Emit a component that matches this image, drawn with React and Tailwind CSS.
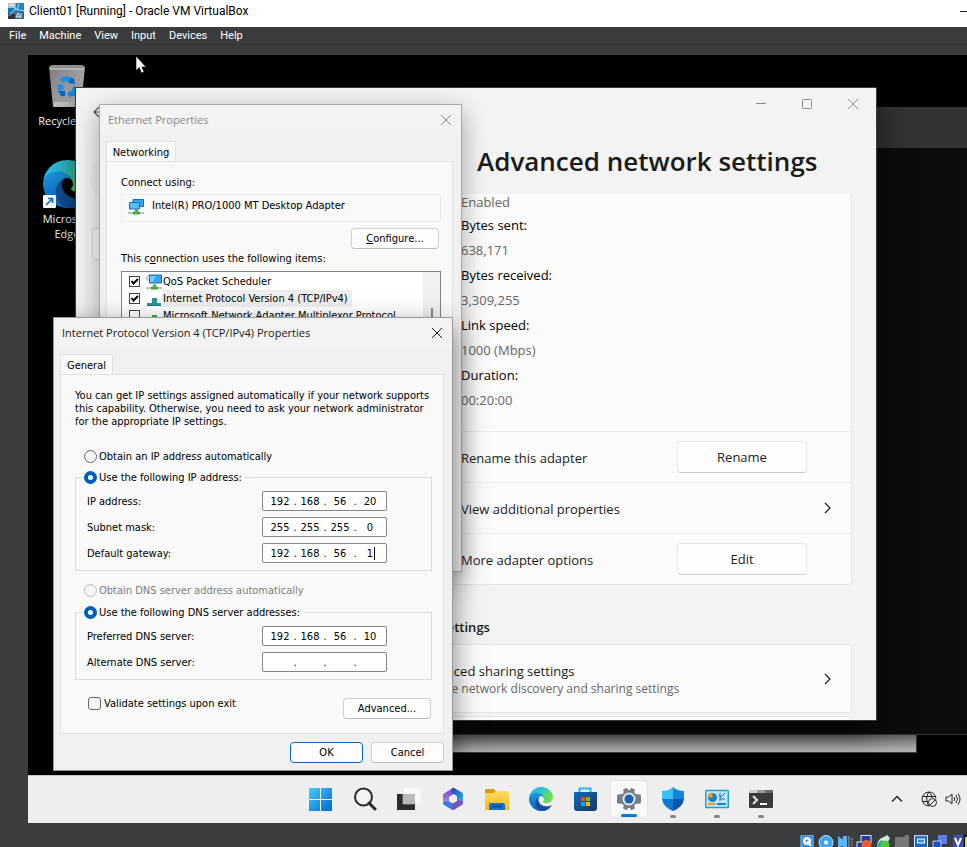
import React from "react";

const UI = "font-['Open_Sans','Noto_Sans',sans-serif]";
const HOST = "font-['Roboto','Open_Sans',sans-serif]";

const menus = ["File", "Machine", "View", "Input", "Devices", "Help"];

const stats = [
  ["Bytes sent:", "638,171"],
  ["Bytes received:", "3,309,255"],
  ["Link speed:", "1000 (Mbps)"],
  ["Duration:", "00:20:00"],
];

function Cross({ className = "" }) {
  return (
    <svg viewBox="0 0 12 12" className={`h-3 w-3 ${className}`} fill="none" stroke="currentColor" aria-hidden="true">
      <path d="M1 1l10 10M11 1L1 11" />
    </svg>
  );
}

function Chevron({ className = "" }) {
  return (
    <svg viewBox="0 0 12 12" className={`h-3 w-3 ${className}`} fill="none" stroke="currentColor" strokeWidth="1.2" aria-hidden="true">
      <path d="M4 1l5 5-5 5" />
    </svg>
  );
}

function VmIcon() {
  return (
    <svg viewBox="0 0 16 16" className="-mt-1.5 h-4 w-4" aria-hidden="true">
      <rect width="16" height="16" fill="#4b6f92" />
      <path d="M7 0h9v9h-9z" fill="#1f86c9" />
      <path d="M0 0h7v5H0z" fill="#b9bec4" />
      <path d="M0 5h7l-3 6H0z" fill="#1577bb" />
      <path d="M0 11h7v5H0z" fill="#3a2f35" />
      <path d="M7 0v6L1 13M7 6l9 2M11 1L9 7" stroke="#bfe6ff" fill="none" strokeWidth=".9" />
      <path d="M9 10l5-2 2 1v7H6z" fill="#33658f" />
      <path d="M8 14l2-4 2 4zM13 10v5M1 2h5" stroke="#eef6fb" fill="none" />
    </svg>
  );
}

function RecycleBin() {
  return (
    <svg viewBox="0 0 36 43" className="h-[43px] w-9" aria-hidden="true">
      <defs>
        <linearGradient id="bin" x1="0" y1="0" x2="1" y2="1">
          <stop offset="0" stopColor="#77797c" />
          <stop offset=".6" stopColor="#a4a6a9" />
          <stop offset="1" stopColor="#cfd0d2" />
        </linearGradient>
      </defs>
      <path d="M0 2L3 0h30l3 2-4 40H4z" fill="url(#bin)" />
      <path d="M0 2L3 0h30l3 2v2H0z" fill="#8e9093" />
      <path d="M1 4h34" stroke="#d6d7d9" />
      <path d="M5 37h26l-1 5H5z" fill="#c6c8ca" />
      <g fill="#1b93ea">
        <path d="M13 12l6-1 4 5-4 2-2-3-2 3-4-3z" />
        <path d="M21 12l4 2 1 5-6-1z" fill="#0a6ccb" />
        <path d="M9 19l5 1 1 5-3-1-1 4-3-5z" />
        <path d="M9 26l3 0h4v5h-4z" fill="#0a6ccb" />
        <path d="M25 20l3 5-3 6h-3v2l-4-4 4-4v2z" />
      </g>
    </svg>
  );
}

function EdgeIcon({ id, className = "" }) {
  return (
    <svg viewBox="0 0 256 256" className={className} aria-hidden="true">
      <defs>
        <linearGradient id={`${id}-wave`} x1="0" y1="0" x2="1" y2=".4">
          <stop offset="0" stopColor="#35b5f3" />
          <stop offset=".5" stopColor="#2bc3cf" />
          <stop offset="1" stopColor="#6ee04c" />
        </linearGradient>
        <linearGradient id={`${id}-body`} x1="0" y1="0" x2="0" y2="1">
          <stop offset="0" stopColor="#1b9de2" />
          <stop offset="1" stopColor="#0f5fc0" />
        </linearGradient>
      </defs>
      <path d="M235.680 195.460a93.730 93.730 0 0 1-10.540 4.710 101.870 101.870 0 0 1-35.900 6.460c-47.320 0-88.540-32.550-88.540-74.320a31.480 31.480 0 0 1 16.430-27.310c-42.800 1.800-53.800 46.400-53.800 72.530 0 73.880 68.090 81.370 82.760 81.370 7.910 0 19.840-2.300 27-4.560l1.310-.44a128.340 128.340 0 0 0 66.600-52.800 4 4 0 0 0-5.320-5.640z" fill="#11509c" />
      <path d="M105.730 241.420a79.200 79.200 0 0 1-22.740-21.340 80.720 80.720 0 0 1 29.530-120c3.120-1.470 8.450-4.130 15.540-4a32.350 32.350 0 0 1 25.690 13 31.880 31.880 0 0 1 6.360 18.660c0-.21 24.460-79.600-80-79.600-43.900 0-80 41.660-80 78.210a130.150 130.150 0 0 0 12.110 56 128 128 0 0 0 156.380 67.110 75.550 75.550 0 0 1-62.780-8z" fill={`url(#${id}-body)`} />
      <path d="M152.330 148.860c-.81 1.050-3.300 2.500-3.300 5.660 0 2.610 1.700 5.120 4.720 7.230 14.380 10 41.490 8.680 41.560 8.680a59.560 59.560 0 0 0 30.270-8.350 61.380 61.380 0 0 0 30.430-52.880c.26-22.410-8-37.310-11.340-43.910C223.520 23.870 177.720 0 128 0A128 128 0 0 0 0 126.200c.48-36.540 36.800-66.050 80-66.050 3.500 0 23.460.34 42 10.070 16.340 8.580 24.900 18.940 30.850 29.210 6.180 10.670 7.280 24.150 7.280 29.520s-2.740 13.330-7.800 19.910z" fill={`url(#${id}-wave)`} />
    </svg>
  );
}

function NetIcon({ gear = false }) {
  return (
    <svg viewBox="0 0 16 16" className="h-4 w-4" aria-hidden="true">
      {gear && <circle cx="3.500" cy="4" r="2.500" fill="none" stroke="#98a0a6" strokeWidth="2" strokeDasharray="1.500 1" />}
      <path d={gear ? "M3.500 1h12v8h-12z" : "M5 .5h10.500v7H5z"} fill="#36a3f0" stroke="#1f6ea8" />
      {!gear && <path d="M1.500 3.500h10v6.500h-10z" fill="#54bcff" stroke="#1f6ea8" />}
      {gear && <path d="M4 2h6l-3 6H4z" fill="#72caff" />}
      <path d="M7 10.500h3v2H7z" fill="#2da02a" />
      <path d="M0 13h16v2H0z" fill="#b7c0c2" />
      <path d="M5 12.500h7v3H5z" fill="#39b131" />
    </svg>
  );
}

function ProtocolIcon({ color }) {
  return (
    <svg viewBox="0 0 14 16" className="h-4 w-4" aria-hidden="true">
      <path d="M5 7h5v5h4v3H0v-3h5z" fill={color} />
      <path d="M0 14h14v1H0z" fill="#1d7077" />
    </svg>
  );
}

function CheckItem({ id, label, checked, selected, icon }) {
  return (
    <li className="flex h-[17px] items-center">
      <span className="relative mr-1.5 flex h-[11px] w-[11px] items-center">
        <input id={id} type="checkbox" defaultChecked={checked} className="peer h-[11px] w-[11px] appearance-none border border-[#444] bg-white" />
        <svg viewBox="0 0 11 11" className="pointer-events-none absolute inset-0 hidden h-[11px] w-[11px] peer-checked:block" fill="none" stroke="#000" strokeWidth="2" aria-hidden="true">
          <path d="M2.500 5l2 2.500L9 3" />
        </svg>
      </span>
      {icon}
      <label htmlFor={id} className={`h-[17px] pr-1 pl-px leading-[17px] whitespace-nowrap ${selected ? "bg-[#eee]" : ""}`}>{label}</label>
    </li>
  );
}

function Radio({ id, name, label, checked, disabled }) {
  return (
    <div className="flex h-[15px] items-center gap-0.5 bg-[#f9f9f9] pr-[3px]">
      <input
        id={id}
        name={name}
        type="radio"
        defaultChecked={checked}
        disabled={disabled}
        className="h-[13px] w-[13px] appearance-none rounded-full border border-[#666] bg-[#f6f6f6] checked:border-4 checked:border-[#005fb8] checked:bg-white disabled:border-[#bbb]"
      />
      <label htmlFor={id} className={`whitespace-nowrap ${disabled ? "text-[#7d7d7d]" : ""}`}>{label}</label>
    </div>
  );
}

function IpRow({ label, parts, caret }) {
  return (
    <div role="group" aria-label={label} className="flex h-[26px] items-center justify-between pr-11 pl-[11px]">
      <span>{label}</span>
      <div className="flex h-5 w-[125px] items-center rounded-[2px] border border-[#858585] bg-white pr-1 pl-[5px]">
        {parts.map((part, i) => (
          <React.Fragment key={i}>
            {i > 0 && <span className="w-1.5 text-center">.</span>}
            <span className="relative flex w-6 justify-center">
              <input aria-label={`${label} ${i + 1}`} defaultValue={part} className="w-6 bg-transparent text-center outline-none" />
              {caret && i === 3 && <span className="absolute top-0 left-4 h-[13px] w-px bg-black" />}
            </span>
          </React.Fragment>
        ))}
      </div>
    </div>
  );
}

const dlgButton = "flex h-[21px] items-center justify-center rounded-[4px] border border-[#d0d0d0] border-b-[#bbb] bg-[#fdfdfd]";

function Settings() {
  const row = "flex h-[51px] items-center border-t border-[#ededed] pr-[18px] pl-[84px]";
  const btn = "mr-[26px] ml-auto h-8 w-[130px] rounded-[4px] border border-[#e6e6e6] border-b-[#ccc] bg-[#fefefe]";
  return (
    <section className={`absolute top-8 left-[47px] flex h-[634px] w-[802px] flex-col overflow-hidden border border-[#3a3a3a] bg-[#f3f3f3] text-[13px] text-[#1b1b1b] shadow-[0_10px_30px_rgba(0,0,0,0.6)] ${UI}`}>
      <header className="flex h-8 items-center text-[#8a8a8a]">
        <button aria-label="Back" className="mt-4 ml-[17px]">
          <svg viewBox="0 0 16 12" className="h-3 w-4" fill="none" stroke="#555" strokeWidth="1.200"><path d="M6 1L1 6l5 5M1 6h14" /></svg>
        </button>
        <div className="ml-auto flex">
          <button aria-label="Minimize" className="flex w-[46px] justify-center">
            <svg viewBox="0 0 12 12" className="h-3 w-3" stroke="currentColor"><path d="M1 5.500h10" /></svg>
          </button>
          <button aria-label="Maximize" className="flex w-[46px] justify-center">
            <svg viewBox="0 0 12 12" className="h-3 w-3" fill="none" stroke="currentColor"><rect x="1.500" y="1.500" width="9" height="9" rx="1" /></svg>
          </button>
          <button aria-label="Close" className="flex w-[46px] justify-center"><Cross /></button>
        </div>
      </header>
      <div className="flex min-h-0 flex-1">
        <aside className="w-[301px] pt-[34px] pl-3.5">
          <div className="h-12 w-12 rounded-full bg-[#eee]" />
          <div className="mt-[26px] ml-0.5 h-8 w-60 rounded-[4px] border border-[#d5d5d5] bg-[#fbfbfb]" />
        </aside>
        <div className="flex min-w-0 flex-1 flex-col pr-6">
          <h1 className="flex h-[74px] items-center pt-2 pl-[100px] text-[26px] font-semibold whitespace-nowrap">Advanced network settings</h1>
          <div className="flex min-h-0 flex-1 flex-col overflow-hidden">
            <div className="shrink-0 rounded-b-[4px] border-r border-b border-[#e5e5e5] bg-[#fbfbfb]">
              <dl className="flex h-[237px] flex-col pl-[84px] leading-[25px] text-black">
                <dd className="pb-0.5 leading-[17px] text-[#666]">Enabled</dd>
                {stats.map(([k, v]) => (
                  <React.Fragment key={k}>
                    <dt>{k}</dt>
                    <dd className="text-[#666]">{v}</dd>
                  </React.Fragment>
                ))}
              </dl>
              <div className={row}><span className="pt-0.5">Rename this adapter</span><button className={btn}>Rename</button></div>
              <div className={row}><span className="pt-0.5">View additional properties</span><Chevron className="ml-auto" /></div>
              <div className={row}><span className="pt-0.5">More adapter options</span><button className={btn}>Edit</button></div>
            </div>
            <h2 className="mt-[30px] mb-[5px] shrink-0 pl-[27px] leading-6 font-semibold">More settings</h2>
            <div className="flex h-[69px] shrink-0 items-center rounded-[4px] border border-[#e5e5e5] bg-[#fbfbfb] pr-[18px] pl-[38px]">
              <div className="pt-0.5">
                <p className="leading-[18px]">Advanced sharing settings</p>
                <p className="text-[12px] leading-[18px] text-[#666]">Change network discovery and sharing settings</p>
              </div>
              <Chevron className="ml-auto" />
            </div>
            <div className="mt-[3px] h-12 shrink-0 rounded-[4px] border border-[#e5e5e5] bg-[#fbfbfb]" />
          </div>
        </div>
      </div>
    </section>
  );
}

function EthernetDialog() {
  return (
    <section className="absolute top-[49px] left-[71px] flex h-[468px] w-[363px] flex-col overflow-hidden border border-[#aaa] bg-[#f0f0f0] shadow-[0_8px_24px_rgba(0,0,0,0.35)]">
      <header className={`flex h-[29px] items-center justify-between bg-[#f3f3f3] pr-[9px] pl-2 text-[#8a8a8a] ${UI}`}>
        <h2 className="text-[11px]">Ethernet Properties</h2>
        <button aria-label="Close Ethernet Properties"><Cross /></button>
      </header>
      <div className="flex flex-1 flex-col pt-[7px] pr-2 pl-1.5">
        <div className="-mb-px flex h-[21px] w-[70px] items-center justify-center border border-b-0 border-[#e2e2e2] bg-[#f9f9f9]">Networking</div>
        <div className="flex-1 border border-[#e2e2e2] bg-[#f9f9f9] pt-[13px] pr-[11px] pl-3.5">
          <p className="leading-4">Connect using:</p>
          <div className="mt-[3px] flex h-7 items-start gap-2 border border-[#ebebeb] pt-1 pl-1.5"><NetIcon />Intel(R) PRO/1000 MT Desktop Adapter</div>
          <button className={`mt-1.5 mr-0.5 ml-auto w-[88px] ${dlgButton}`}><span><u>C</u>onfigure...</span></button>
          <p className="mt-0.5 mb-1 leading-4">This c<u>o</u>nnection uses the following items:</p>
          <div className="flex h-40 justify-between border border-[#7f858c] bg-white">
            <ul className="pt-px pl-[7px]">
              <CheckItem id="qos" label="QoS Packet Scheduler" checked icon={<NetIcon gear />} />
              <CheckItem id="ipv4" label="Internet Protocol Version 4 (TCP/IPv4)" checked selected icon={<ProtocolIcon color="#27979a" />} />
              <CheckItem id="mux" label="Microsoft Network Adapter Multiplexor Protocol" icon={<ProtocolIcon color="#3aa845" />} />
            </ul>
            <div className="flex w-[17px] justify-center bg-[#f0f0f0] pt-9"><span className="h-20 w-0.5 bg-[#888]" /></div>
          </div>
        </div>
      </div>
    </section>
  );
}

function Ipv4Dialog() {
  return (
    <section className="absolute top-[262px] left-[25px] flex h-[454px] w-[400px] flex-col border border-[#999] bg-[#f0f0f0] shadow-[0_10px_26px_rgba(0,0,0,0.5)]">
      <header className={`flex h-[29px] items-center justify-between bg-[#f3f3f3] pr-[9px] pl-2 text-[#1a1a1a] ${UI}`}>
        <h2 className="text-[11px]">Internet Protocol Version 4 (TCP/IPv4) Properties</h2>
        <button aria-label="Close Internet Protocol Properties"><Cross /></button>
      </header>
      <div className="flex flex-1 flex-col pt-[7px] pr-2 pb-[7px] pl-1.5">
        <div className="-mb-px flex h-[21px] w-[53px] items-center justify-center border border-b-0 border-[#e2e2e2] bg-[#f9f9f9]">General</div>
        <div className="flex flex-1 flex-col border border-[#e2e2e2] bg-[#f9f9f9] pt-3.5 pr-[11px] pl-3.5">
          <p className="whitespace-nowrap">
            You can get IP settings assigned automatically if your network supports<br />
            this capability. Otherwise, you need to ask your network administrator<br />
            for the appropriate IP settings.
          </p>
          <div className="mt-[21px] ml-[9px] flex"><Radio id="ip-auto" name="ip" label="Obtain an IP address automatically" /></div>
          <fieldset className="mt-1.5 border border-[#dcdcdc] pb-1">
            <legend className="ml-2"><Radio id="ip-manual" name="ip" label="Use the following IP address:" checked /></legend>
            <div className="pt-[3px]">
              <IpRow label="IP address:" parts={["192", "168", "56", "20"]} />
              <IpRow label="Subnet mask:" parts={["255", "255", "255", "0"]} />
              <IpRow label="Default gateway:" parts={["192", "168", "56", "1"]} caret />
            </div>
          </fieldset>
          <div className="mt-3 ml-[9px] flex"><Radio id="dns-auto" name="dns" label="Obtain DNS server address automatically" disabled /></div>
          <fieldset className="mt-[7px] border border-[#dcdcdc] pb-1">
            <legend className="ml-2"><Radio id="dns-manual" name="dns" label="Use the following DNS server addresses:" checked /></legend>
            <div className="pt-[3px]">
              <IpRow label="Preferred DNS server:" parts={["192", "168", "56", "10"]} />
              <IpRow label="Alternate DNS server:" parts={["", "", "", ""]} />
            </div>
          </fieldset>
          <div className="mt-[17px] flex items-start justify-between pr-px pl-[13px]">
            <div className="flex items-center gap-[3px]">
              <input id="validate" type="checkbox" className="h-[13px] w-[13px] appearance-none rounded-[3px] border border-[#666] bg-[#f6f6f6]" />
              <label htmlFor="validate">Validate settings upon exit</label>
            </div>
            <button className={`mt-px w-[88px] ${dlgButton}`}>Advanced...</button>
          </div>
        </div>
        <div className="mt-2 flex justify-end gap-2">
          <button className="flex h-[21px] w-[73px] items-center justify-center rounded-[4px] border border-[#0067c0] bg-[#fdfdfd]">OK</button>
          <button className={`w-[73px] ${dlgButton}`}>Cancel</button>
        </div>
      </div>
    </section>
  );
}

function Desktop() {
  return (
    <main className="relative min-h-0 flex-1 overflow-hidden bg-black">
      <div className={`absolute top-2.5 left-[7px] flex w-16 flex-col items-center text-[11px] leading-[15px] text-white ${UI}`}>
        <RecycleBin />
        <span className="mt-[5px] whitespace-nowrap">Recycle Bin</span>
        <span className="relative mt-8">
          <EdgeIcon id="edge-desktop" className="h-12 w-12" />
          <svg viewBox="0 0 13 13" className="absolute bottom-0 left-0 h-[13px] w-[13px]" aria-hidden="true"><rect width="13" height="13" rx="1" fill="#fff" /><path d="M3 10l6-6M5 3.500h4.500V8" stroke="#0a74cf" strokeWidth="1.600" fill="none" /></svg>
        </span>
        <span className="mt-[3px] text-center">Microsoft Edge</span>
      </div>
      <div className="absolute top-20 left-[200px] h-[618px] w-[689px] border border-[#444] bg-[#c4c4c4]" />
      <div className="absolute top-[52px] right-0 left-[300px] h-[628px] border-b border-[#333] bg-[#0c0c0c] shadow-[0_4px_20px_rgba(0,0,0,0.8)]">
        <div className="h-[41px] bg-[#333]" />
      </div>
      <Settings />
      <EthernetDialog />
      <Ipv4Dialog />
    </main>
  );
}

function Task({ label, children, active, open }) {
  return (
    <button aria-label={label} className={`relative mx-[3px] flex h-[38px] w-[38px] items-center justify-center rounded-[4px] ${active ? "border border-[#e3e3e3] bg-[#f9f9f9]" : ""}`}>
      {children}
      {active && <span className="absolute bottom-0 h-[3px] w-4 rounded-full bg-[#0078d4]" />}
      {open && <span className="absolute bottom-0 h-[3px] w-1.5 rounded-full bg-[#858585]" />}
    </button>
  );
}

function Taskbar() {
  const ic = "h-6 w-6";
  return (
    <nav className="flex h-12 shrink-0 items-center border-t border-[#c9c9c9] bg-[#eee] pr-1.5 pb-0.5 pl-[271px]">
      <Task label="Start">
        <svg viewBox="0 0 24 24" className={ic}><defs><linearGradient id="win" x1="0" y1="0" x2="1" y2="1"><stop offset="0" stopColor="#4cc9fb" /><stop offset="1" stopColor="#0067c9" /></linearGradient></defs><path d="M0 1h11v11H0zM12 1h11v11H12zM0 13h11v11H0zM12 13h11v11H12z" fill="url(#win)" /></svg>
      </Task>
      <Task label="Search">
        <svg viewBox="0 0 24 24" className={ic} fill="none" stroke="#2b2b2b"><circle cx="10.500" cy="10" r="8.500" strokeWidth="2" fill="#f3f3f3" /><path d="M16 16l6 6" strokeWidth="3" strokeLinecap="round" /></svg>
      </Task>
      <Task label="Task view">
        <svg viewBox="0 0 24 24" className={ic}><path d="M0 7h18v16H0z" fill="#2c2c2c" /><path d="M6 1h18v16H6z" fill="#fafafa" stroke="#e2e2e2" strokeWidth=".5" /><path d="M6 7h12v10H6z" fill="#b9b9b9" /></svg>
      </Task>
      <Task label="Microsoft 365">
        <svg viewBox="0 0 24 24" className={ic}><defs><linearGradient id="mA" x1="0" y1="0" x2="0" y2="1"><stop offset="0" stopColor="#7a3fc4" /><stop offset="1" stopColor="#a98cf0" /></linearGradient><linearGradient id="mB" x1="0" y1="0" x2="1" y2="1"><stop offset="0" stopColor="#1b3fa8" /><stop offset="1" stopColor="#37b4f5" /></linearGradient></defs><path d="M12 1L3 6.500q-1 .5-1 2V16l6 1V10l5-3z" fill="url(#mA)" /><path d="M11 1q1.500-.5 3 .5l7 4q1 .7 1 2V15l-6-2V9l-5-3z" fill="url(#mB)" /><path d="M22 14v2q0 1.200-1 2l-7.500 4.500q-1.500.8-3 0V16l5.500-3z" fill="#7953b5" /><path d="M2 15.500l5.500-1.500 5 3-1 6-8.500-5q-1-.7-1-2z" fill="#3f78dc" /><path d="M12 8l4 2v4l-4 2.500L8 14v-4z" fill="#eee" /></svg>
      </Task>
      <Task label="File Explorer">
        <svg viewBox="0 0 24 24" className={ic}><defs><linearGradient id="fold" x1="0" y1="0" x2="0" y2="1"><stop offset="0" stopColor="#ffdb66" /><stop offset="1" stopColor="#fcb817" /></linearGradient></defs><path d="M0 3q0-1 1-1h8l2 3v5H0z" fill="#dd9a06" /><path d="M0 6l9 0 2-2h12q1 0 1 1v18H0z" fill="url(#fold)" /><path d="M4 23v-5q0-2 2-2h12q2 0 2 2v5z" fill="#0f73c9" /><path d="M7 18.500h10v2H7z" fill="#084a91" /></svg>
      </Task>
      <Task label="Microsoft Edge"><EdgeIcon id="edge-task" className={ic} /></Task>
      <Task label="Microsoft Store">
        <svg viewBox="0 0 24 24" className={ic}><defs><linearGradient id="store" x1="0" y1="0" x2="1" y2="1"><stop offset="0" stopColor="#0f6cbf" /><stop offset="1" stopColor="#1c3561" /></linearGradient></defs><path d="M6.500 6V1.500h11V6" fill="none" stroke="#2fb4ee" strokeWidth="2" /><path d="M1 5h23v16q0 3-3 3H4q-3 0-3-3z" fill="url(#store)" /><path d="M8 10h4v4H8z" fill="#f25022" /><path d="M13 10h4v4h-4z" fill="#7fba00" /><path d="M8 15h4v4H8z" fill="#00a4ef" /><path d="M13 15h4v4h-4z" fill="#ffb900" /></svg>
      </Task>
      <Task label="Settings" active>
        <svg viewBox="0 0 24 24" className={ic}><path d="M8 1.500l2-.7 1 2.200h2l1-2.200 2 .7 2 1.200-.8 2.600 1.500 2h3l2.300.7v8l-2.300.7h-3l-1.500 2 .8 2.600-2 1.200-2 .7-1-2.200h-2l-1 2.200-2-.7-2-1.200.8-2.600-1.500-2h-3L0 16V8l2.300-.7h3l1.500-2L6 2.700z" fill="#767e86" /><circle cx="12" cy="12" r="6.500" fill="#e3e8ec" /><circle cx="12" cy="12" r="4.500" fill="#1463b8" /></svg>
      </Task>
      <Task label="Windows Security" open>
        <svg viewBox="0 0 24 24" className={ic}><path d="M12 0q4 4 11 4v8H12z" fill="#0f86dd" /><path d="M12 0Q8 4 1 4v8h11z" fill="#3cc0f4" /><path d="M1 12h11v12Q2 20 1 12z" fill="#0d78d6" /><path d="M23 12H12v12q10-4 11-12z" fill="#0c55a8" /></svg>
      </Task>
      <Task label="Control Panel" open>
        <svg viewBox="0 0 24 24" className={ic}><rect x=".7" y="3.500" width="22.600" height="17" rx="1" fill="#bfe9fb" stroke="#1c9fe0" strokeWidth="1.500" /><circle cx="7.500" cy="10.500" r="4.500" fill="#1583cf" /><path d="M7.500 10.500V5.500a5 5 0 00-5 5z" fill="#f59a1b" /><path d="M14 8l2 2 4-4M15 12h5M15 6v8" stroke="#1a6fab" fill="none" /><path d="M3 17h8" stroke="#f59a1b" strokeWidth="2" /><path d="M12 17h9" stroke="#1583cf" strokeWidth="2" /></svg>
      </Task>
      <Task label="Terminal" open>
        <svg viewBox="0 0 24 24" className={ic}><rect y="3" width="24" height="18" rx="1" fill="#3a3a3a" /><path d="M0 3h8v3H0z" fill="#d0d0d0" /><path d="M8 3h8v3H8z" fill="#9a9a9a" /><path d="M16 3h8v3h-8z" fill="#6a6a6a" /><path d="M4 9l4 4-4 4" fill="none" stroke="#e6e6e6" strokeWidth="2" /><path d="M11 17h7" stroke="#fff" strokeWidth="2" /></svg>
      </Task>
      <div className="ml-auto flex items-center text-[#222]">
        <button aria-label="Hidden icons" className="mr-[18px]"><svg viewBox="0 0 12 12" className="h-3 w-3" fill="none" stroke="currentColor" strokeWidth="1.400"><path d="M1 8.500l5-5 5 5" /></svg></button>
        <svg viewBox="0 0 16 16" className="mr-2 h-4 w-4" fill="none" stroke="currentColor" role="img" aria-label="No internet"><path d="M8 15A7 7 0 1115 7.500M8 15C5 12 5 4 8 1c2 2 3 4 3 6M1.500 5.500h13M1.500 10.500h6" /><circle cx="11.500" cy="11.500" r="4" /><path d="M9 14l5-5" /></svg>
        <svg viewBox="0 0 16 16" className="h-4 w-4" fill="none" stroke="currentColor" role="img" aria-label="Volume"><path d="M1 6h2.500L7 3v10l-3.500-3H1zM9 6q1.500 2 0 4M11 4q3 4 0 8M13 2.500q4 5.500 0 11" /></svg>
      </div>
    </nav>
  );
}

function StatusBar() {
  const ic = "h-4 w-4 shrink-0";
  return (
    <footer className="flex h-6 shrink-0 items-start justify-end gap-[3px] overflow-hidden pt-3">
      <svg viewBox="0 0 16 16" className={ic}><rect x="2" width="12" height="16" rx="1" fill="#2b8fe0" stroke="#8cc8f5" /><circle cx="8" cy="6" r="4" fill="#fff" /><circle cx="8" cy="6" r="1.500" fill="#1f6fc0" /><path d="M8 6l4 5" stroke="#fff" strokeWidth="2" /></svg>
      <svg viewBox="0 0 16 16" className={ic}><circle cx="8" cy="7.500" r="7" fill="#3ba7ee" stroke="#b8e0fb" /><circle cx="8" cy="7.500" r="2" fill="#fff" /></svg>
      <svg viewBox="0 0 16 16" className={ic}><path d="M1 1l4 3h1V1h4v12H6v-2H5l-4 3z" fill="#58b6f4" /><path d="M12 1v14M14 4h2M14 7h2M14 10h2" stroke="#7c858c" strokeWidth="1.500" /></svg>
      <svg viewBox="0 0 16 16" className={ic}><rect x="5" y=".5" width="10" height="7" fill="#1d3f9d" stroke="#dfe6ff" /><rect x="1" y="7" width="9" height="6" fill="#1d3f9d" stroke="#dfe6ff" /><circle cx="10.500" cy="10" r="5" fill="#ee5a36" /></svg>
      <svg viewBox="0 0 16 16" className={ic}><path d="M2 14Q1 4 9 2l3-2 3 3-2 4q-2 2-6 1-3 2-2 7z" fill="#cfeeda" /><path d="M2 13q0-6 5-8l2 3-4 6z" fill="#2aa9a0" /><circle cx="10" cy="10" r="4.500" fill="#4ccb3c" /></svg>
      <svg viewBox="0 0 16 16" className={ic}><path d="M1 2h9l1-2h4v16H1z" fill="#777" /></svg>
      <svg viewBox="0 0 16 16" className={ic}><rect x="1.500" y=".7" width="13" height="12" fill="#1d66c2" stroke="#d5eaff" /><rect x="4.500" y="4" width="7" height="4" fill="#2b8fe0" stroke="#fff" /></svg>
      <svg viewBox="0 0 16 16" className={ic}><path d="M6 0h9v9H6z" fill="#5f7fe0" /><path d="M1 6h8v7H1z" fill="#1d4fc4" stroke="#b8ccff" /></svg>
      <svg viewBox="0 0 16 16" className={ic}><path d="M2 0h10v16H2z" fill="#3a4fa8" /><path d="M4 3l3 7 3-7" fill="none" stroke="#fff" strokeWidth="2" /><path d="M13 0h3v16h-3z" fill="#111" /><path d="M14 2h2v14h-2z" fill="#e6e01c" /></svg>
    </footer>
  );
}

export default function App() {
  return (
    <div className="relative flex h-screen flex-col overflow-hidden bg-[#3b3c3d] font-['DejaVu_Sans_Condensed','DejaVu_Sans',sans-serif] text-[11px] leading-[13px] text-black">
      <header className={`flex h-[27px] shrink-0 items-center gap-[5px] bg-white pl-2 ${HOST}`}>
        <VmIcon />
        <h1 className="-mt-1 text-[12px]">Client01 [Running] - Oracle VM VirtualBox</h1>
        <button aria-label="Minimize window" className="-mt-1.5 ml-auto"><svg viewBox="0 0 10 10" className="h-2.5 w-2.5" stroke="#222"><path d="M3 5.500h7" /></svg></button>
      </header>
      <nav className={`flex h-[18px] shrink-0 items-center gap-[13px] border-b border-[#333] pl-[9px] text-white ${HOST}`}>
        {menus.map((m) => <button key={m}>{m}</button>)}
      </nav>
      <div className="flex min-h-0 flex-1 flex-col pt-2.5 pl-7">
        <Desktop />
        <Taskbar />
      </div>
      <StatusBar />
      <svg viewBox="0 0 12 19" className="absolute top-[55px] left-[135px] h-[19px] w-3" aria-hidden="true"><path d="M1 1v14.500l3.300-3 2.200 5.500 2.600-1.100L6.900 12H11z" fill="#fff" stroke="#000" strokeWidth=".6" /></svg>
    </div>
  );
}
